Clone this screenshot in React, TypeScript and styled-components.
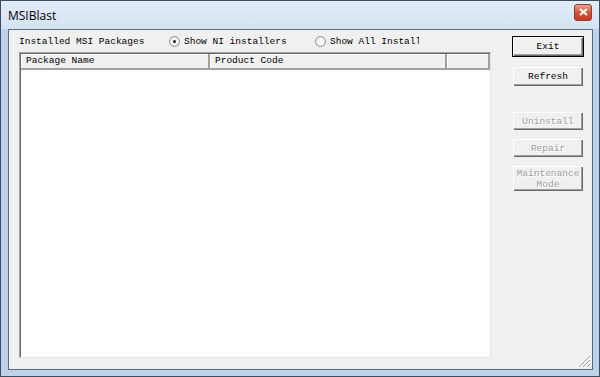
import React from "react";
import styled, { createGlobalStyle } from "styled-components";

const GlobalStyle = createGlobalStyle`
    html, body {
        margin : 0;
        padding : 0;
        background : #ffffff;
    }
    #root {
        width : 600px;
        height : 377px;
    }
`;

const Window = styled.div`
    box-sizing : border-box;
    width : 600px;
    height : 377px;
    display : flex;
    flex-direction : column;
    background : #bcd3ec;
    border : 1px solid #3e4e60;
    padding : 0 6px 6px 7px;
`;

const TitleBar = styled.div`
    display : flex;
    align-items : center;
    justify-content : space-between;
    height : 28px;
    margin : 0 -6px 0 -7px;
    padding : 0 7px 0 7px;
    background : linear-gradient(#e3edf8, #d3e2f2);
    font-family : "Open Sans", "Liberation Sans", sans-serif;
    font-size : 12px;
    color : #000;
`;

const CloseButton = styled.div`
    box-sizing : border-box;
    width : 18px;
    height : 17px;
    margin-top : -6px;
    border : 1px solid #8d3b2a;
    border-radius : 3px;
    background : linear-gradient(#e8a48f, #d2553a 50%, #c7391d);
    display : flex;
    align-items : center;
    justify-content : center;
`;

const Client = styled.div`
    flex : 1;
    box-sizing : border-box;
    display : grid;
    grid-template-columns : 472px 72px;
    column-gap : 21px;
    padding : 0 0 11px 10px;
    background : #f0f0f0;
    border : 1px solid #5e6a78;
    position : relative;
    font-family : "Liberation Mono", "DejaVu Sans Mono", monospace;
    font-size : 9.5px;
    color : #000;
`;

const LeftColumn = styled.div`
    display : flex;
    flex-direction : column;
`;

const OptionsRow = styled.div`
    display : flex;
    align-items : center;
    height : 22px;
    padding-top : 1px;
    box-sizing : border-box;
    white-space : nowrap;
    overflow : hidden;
`;

const Label = styled.span<{ $w?: number }>`
    display : inline-block;
    width : ${(p) => (p.$w ? `${p.$w}px` : "auto")};
    overflow : hidden;
`;

const Radio = styled.span<{ $on?: boolean }>`
    box-sizing : border-box;
    display : inline-flex;
    align-items : center;
    justify-content : center;
    width : 11px;
    height : 11px;
    border-radius : 50%;
    border : 1px solid #8f8f8f;
    background : radial-gradient(#ffffff, #e4e4e4);
    margin-right : 4px;
    &::after {
        content : "";
        display : ${(p) => (p.$on ? "block" : "none")};
        width : 3px;
        height : 3px;
        border-radius : 50%;
        background : #202020;
    }
`;

const ListBox = styled.div`
    flex : 1;
    box-sizing : border-box;
    background : #ffffff;
    border-top : 1px solid #a0a0a0;
    border-left : 1px solid #a0a0a0;
    border-right : 1px solid #e3e3e3;
    border-bottom : 1px solid #e3e3e3;
    box-shadow : inset 1px 1px 0 #696969;
    padding : 1px 0 0 1px;
`;

const HeaderRow = styled.div`
    display : grid;
    grid-template-columns : 189px 237px 43px;
    height : 16px;
`;

const HeaderCell = styled.div`
    box-sizing : border-box;
    background : #f0f0f0;
    border-right : 2px solid #a0a0a0;
    border-bottom : 2px solid #a0a0a0;
    box-shadow : inset 1px 1px 0 #ffffff;
    padding-left : 5px;
    line-height : 14px;
`;

const ButtonColumn = styled.div`
    display : flex;
    flex-direction : column;
    padding-top : 6px;
`;

const Button = styled.div<{ $gap: number; $h: number; $default?: boolean; $disabled?: boolean }>`
    box-sizing : border-box;
    margin-top : ${(p) => p.$gap}px;
    height : ${(p) => p.$h}px;
    display : flex;
    align-items : center;
    justify-content : center;
    text-align : center;
    line-height : 11px;
    background : #f0f0f0;
    color : ${(p) => (p.$disabled ? "#a0a0a0" : "#000")};
    text-shadow : ${(p) => (p.$disabled ? "1px 1px 0 #ffffff" : "none")};
    border : 1px solid ${(p) => (p.$default ? "#000" : "transparent")};
    box-shadow : inset 1px 1px 0 #ffffff, inset -1px -1px 0 #696969, inset -2px -2px 0 #a0a0a0;
`;

const Grip = styled.svg`
    position : absolute;
    right : 1px;
    bottom : 1px;
`;

const App = () => {
    return (
        <>
            <GlobalStyle />
            <Window>
                <TitleBar>
                    <span>MSIBlast</span>
                    <CloseButton>
                        <svg width="9" height="8" viewBox="0 0 9 8">
                            <path d="M1 1 L8 7 M8 1 L1 7" stroke="#ffffff" strokeWidth="2" />
                        </svg>
                    </CloseButton>
                </TitleBar>
                <Client>
                    <LeftColumn>
                        <OptionsRow>
                            <Label $w={150}>Installed MSI Packages</Label>
                            <Radio $on />
                            <Label $w={131}>Show NI installers</Label>
                            <Radio />
                            <Label $w={89}>Show All Installers</Label>
                        </OptionsRow>
                        <ListBox>
                            <HeaderRow>
                                <HeaderCell>Package Name</HeaderCell>
                                <HeaderCell>Product Code</HeaderCell>
                                <HeaderCell />
                            </HeaderRow>
                        </ListBox>
                    </LeftColumn>
                    <ButtonColumn>
                        <Button $gap={0} $h={21} $default>Exit</Button>
                        <Button $gap={9} $h={21}>Refresh</Button>
                        <Button $gap={24} $h={20} $disabled>Uninstall</Button>
                        <Button $gap={7} $h={20} $disabled>Repair</Button>
                        <Button $gap={7} $h={27} $disabled>Maintenance<br />Mode</Button>
                    </ButtonColumn>
                    <Grip width="13" height="13" viewBox="0 0 13 13">
                        <path d="M12 1 L1 12 M12 5 L5 12 M12 9 L9 12" stroke="#a0a0a0" strokeWidth="1" />
                        <path d="M13 2 L2 13 M13 6 L6 13 M13 10 L10 13" stroke="#ffffff" strokeWidth="1" />
                    </Grip>
                </Client>
            </Window>
        </>
    );
};

export default App;
